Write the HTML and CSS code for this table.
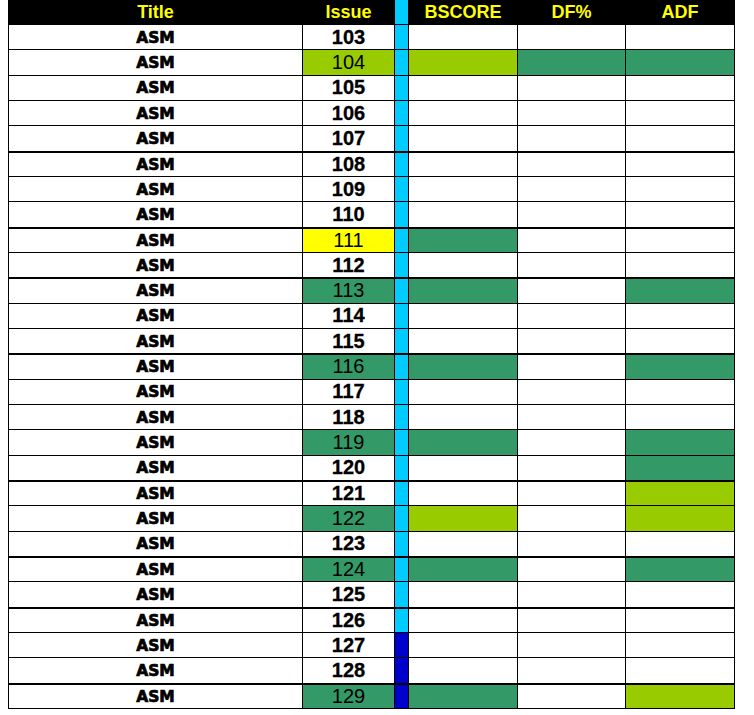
FILE: index.html
```html
<!DOCTYPE html>
<html>
<head>
<meta charset="utf-8">
<link rel="stylesheet" href="styles.css">
</head>
<body>
<div class="sheet">
  <div class="row head">
    <div class="c">Title</div><div class="c">Issue</div><div class="c cy"></div><div class="c">BSCORE</div><div class="c">DF%</div><div class="c">ADF</div>
  </div>
  <div class="row"><div class="c t">ASM</div><div class="c n">103</div><div class="c cy"></div><div class="c"></div><div class="c"></div><div class="c"></div></div>
  <div class="row"><div class="c t">ASM</div><div class="c n reg lg">104</div><div class="c cy"></div><div class="c lg"></div><div class="c g"></div><div class="c g"></div></div>
  <div class="row"><div class="c t">ASM</div><div class="c n">105</div><div class="c cy"></div><div class="c"></div><div class="c"></div><div class="c"></div></div>
  <div class="row"><div class="c t">ASM</div><div class="c n">106</div><div class="c cy"></div><div class="c"></div><div class="c"></div><div class="c"></div></div>
  <div class="row"><div class="c t">ASM</div><div class="c n">107</div><div class="c cy"></div><div class="c"></div><div class="c"></div><div class="c"></div></div>
  <div class="row thick"><div class="c t">ASM</div><div class="c n">108</div><div class="c cy"></div><div class="c"></div><div class="c"></div><div class="c"></div></div>
  <div class="row"><div class="c t">ASM</div><div class="c n">109</div><div class="c cy"></div><div class="c"></div><div class="c"></div><div class="c"></div></div>
  <div class="row"><div class="c t">ASM</div><div class="c n">110</div><div class="c cy"></div><div class="c"></div><div class="c"></div><div class="c"></div></div>
  <div class="row thick"><div class="c t">ASM</div><div class="c n reg y">111</div><div class="c cy"></div><div class="c g"></div><div class="c"></div><div class="c"></div></div>
  <div class="row"><div class="c t">ASM</div><div class="c n">112</div><div class="c cy"></div><div class="c"></div><div class="c"></div><div class="c"></div></div>
  <div class="row thick"><div class="c t">ASM</div><div class="c n reg g">113</div><div class="c cy"></div><div class="c g"></div><div class="c"></div><div class="c g"></div></div>
  <div class="row"><div class="c t">ASM</div><div class="c n">114</div><div class="c cy"></div><div class="c"></div><div class="c"></div><div class="c"></div></div>
  <div class="row"><div class="c t">ASM</div><div class="c n">115</div><div class="c cy"></div><div class="c"></div><div class="c"></div><div class="c"></div></div>
  <div class="row thick"><div class="c t">ASM</div><div class="c n reg g">116</div><div class="c cy"></div><div class="c g"></div><div class="c"></div><div class="c g"></div></div>
  <div class="row"><div class="c t">ASM</div><div class="c n">117</div><div class="c cy"></div><div class="c"></div><div class="c"></div><div class="c"></div></div>
  <div class="row"><div class="c t">ASM</div><div class="c n">118</div><div class="c cy"></div><div class="c"></div><div class="c"></div><div class="c"></div></div>
  <div class="row"><div class="c t">ASM</div><div class="c n reg g">119</div><div class="c cy"></div><div class="c g"></div><div class="c"></div><div class="c g"></div></div>
  <div class="row"><div class="c t">ASM</div><div class="c n">120</div><div class="c cy"></div><div class="c"></div><div class="c"></div><div class="c g"></div></div>
  <div class="row thick"><div class="c t">ASM</div><div class="c n">121</div><div class="c cy"></div><div class="c"></div><div class="c"></div><div class="c lg"></div></div>
  <div class="row"><div class="c t">ASM</div><div class="c n reg g">122</div><div class="c cy"></div><div class="c lg"></div><div class="c"></div><div class="c lg"></div></div>
  <div class="row"><div class="c t">ASM</div><div class="c n">123</div><div class="c cy"></div><div class="c"></div><div class="c"></div><div class="c"></div></div>
  <div class="row thick"><div class="c t">ASM</div><div class="c n reg g">124</div><div class="c cy"></div><div class="c g"></div><div class="c"></div><div class="c g"></div></div>
  <div class="row"><div class="c t">ASM</div><div class="c n">125</div><div class="c cy"></div><div class="c"></div><div class="c"></div><div class="c"></div></div>
  <div class="row thick"><div class="c t">ASM</div><div class="c n">126</div><div class="c cy"></div><div class="c"></div><div class="c"></div><div class="c"></div></div>
  <div class="row"><div class="c t">ASM</div><div class="c n">127</div><div class="c bl"></div><div class="c"></div><div class="c"></div><div class="c"></div></div>
  <div class="row"><div class="c t">ASM</div><div class="c n">128</div><div class="c bl"></div><div class="c"></div><div class="c"></div><div class="c"></div></div>
  <div class="row thick last"><div class="c t">ASM</div><div class="c n reg g">129</div><div class="c bl"></div><div class="c g"></div><div class="c"></div><div class="c lg"></div></div>
</div>
</body>
</html>
```
FILE: styles.css
```css
html, body {
  margin: 0;
  padding: 0;
  background: #ffffff;
}

.sheet {
  margin-left: 8px;
  width: 727px;
  display: flex;
  flex-direction: column;
  border-left: 1px solid #000;
  box-sizing: border-box;
  font-family: "Liberation Sans", Arial, sans-serif;
}

.row {
  display: grid;
  grid-template-columns: 294px 92px 14px 109px 108px 109px;
  height: 25.333px;
  box-sizing: border-box;
  border-top: 1px solid #000;
}

.row.thick {
  border-top-width: 2px;
}

.row.last {
  height: 26.333px;
  border-bottom: 1px solid #000;
}

.row.head {
  height: 24px;
  border-top: 0;
  background: #000;
}

.c {
  box-sizing: border-box;
  border-right: 1px solid #000;
  display: flex;
  align-items: center;
  justify-content: center;
  overflow: hidden;
}

.head .c {
  color: #ffff00;
  font-weight: bold;
  font-size: 18px;
}

.t {
  font-family: "DejaVu Sans", sans-serif;
  font-weight: bold;
  font-size: 15.5px;
  color: #000;
  -webkit-text-stroke: 0.7px #000;
  padding-top: 1px;
}

.n {
  font-weight: bold;
  font-size: 20px;
  color: #000;
  -webkit-text-stroke: 0.3px #000;
}

.n.reg {
  font-weight: normal;
  -webkit-text-stroke: 0;
}

.lg { background: #99cc00; }
.g { background: #339966; }
.y { background: #ffff00; }
.cy { background: #00ccff; }
.bl { background: #0000cc; }
```
